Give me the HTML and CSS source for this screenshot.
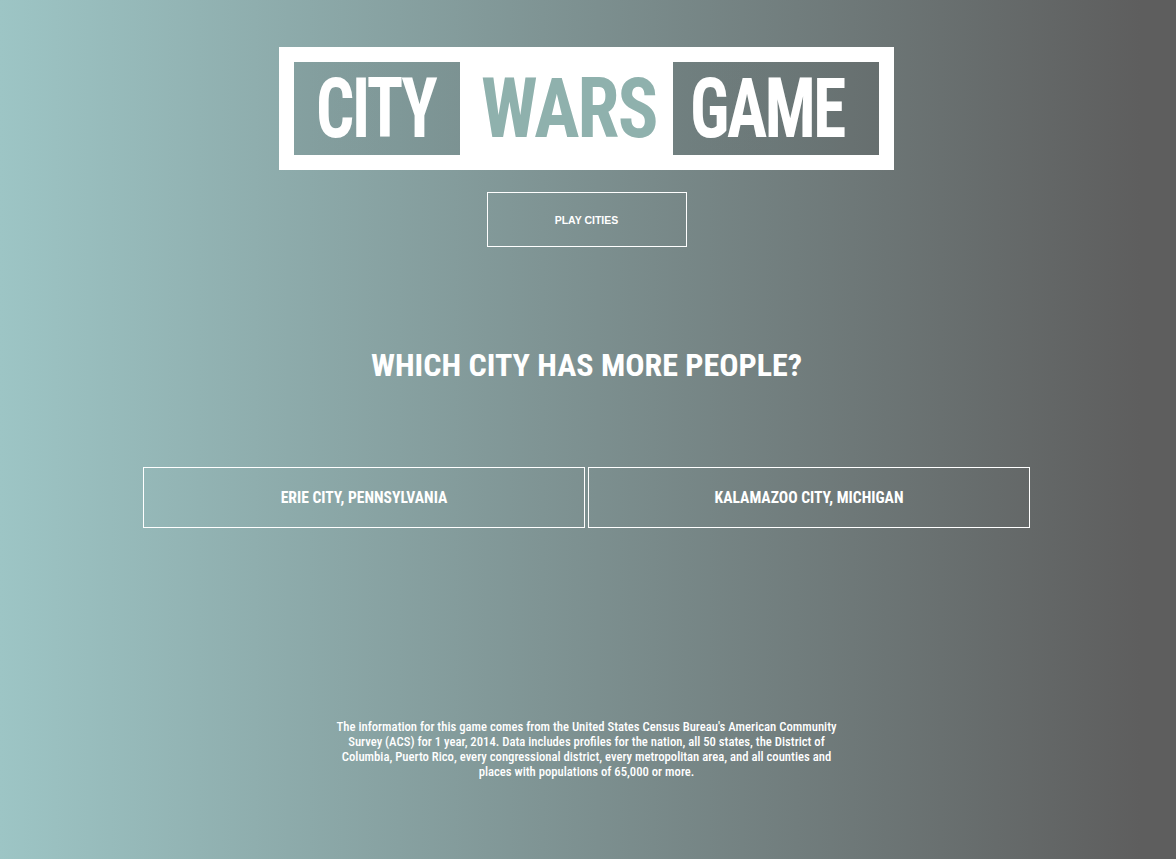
FILE: index.html
```html
<!DOCTYPE html>
<html>
<head>
<meta charset="utf-8">
<link rel="stylesheet" href="styles.css">
</head>
<body>
<main class="page">
  <header class="logo">
    <div class="logo-box logo-city"><span class="logo-word">CITY</span></div>
    <div class="logo-mid"><span class="logo-word wars">WARS</span></div>
    <div class="logo-box logo-game"><span class="logo-word">GAME</span></div>
  </header>
  <button class="play">PLAY CITIES</button>
  <h1 class="question">WHICH CITY HAS MORE PEOPLE?</h1>
  <div class="choices">
    <button class="choice">ERIE CITY, PENNSYLVANIA</button>
    <button class="choice">KALAMAZOO CITY, MICHIGAN</button>
  </div>
  <p class="note">The information for this game comes from the United States Census Bureau's American Community Survey (ACS) for 1 year, 2014. Data includes profiles for the nation, all 50 states, the District of Columbia, Puerto Rico, every congressional district, every metropolitan area, and all counties and places with populations of 65,000 or more.</p>
</main>
</body>
</html>
```

FILE: styles.css
```css
html, body {
  margin: 0;
  height: 100%;
}
body {
  background: linear-gradient(to right, #9dc5c5 0%, #5e5e5e 97%, #5e5e5e 100%);
  background-attachment: fixed;
  font-family: "Roboto Condensed", "Roboto", "Liberation Sans", sans-serif;
  color: #fff;
  padding-right: 3px;
}
.page {
  display: flex;
  flex-direction: column;
  align-items: center;
  padding-top: 47px;
}
.logo {
  background: #fff;
  padding: 15px;
  display: grid;
  grid-template-columns: 166px 213px 206px;
  height: 93px;
}
.logo-box {
  background: linear-gradient(rgba(0, 0, 0, 0.06), rgba(0, 0, 0, 0.06)),
    linear-gradient(to right, #9dc5c5 0%, #5e5e5e 97%, #5e5e5e 100%);
  background-attachment: fixed, fixed;
  display: flex;
  align-items: center;
  min-width: 0;
}
.logo-city {
  padding-left: 22px;
}
.logo-game {
  padding-left: 17px;
}
.logo-mid {
  display: flex;
  align-items: center;
  padding-left: 21px;
  min-width: 0;
}
.logo-word {
  display: inline-block;
  font-weight: 700;
  font-size: 84px;
  line-height: 1;
  letter-spacing: -3px;
  color: #fff;
  transform: scaleX(0.8);
  transform-origin: left center;
  white-space: nowrap;
}
.logo-word.wars {
  color: #8fb1ad;
  letter-spacing: -2px;
  transform: scaleX(0.9);
}
.play {
  margin-top: 22px;
  width: 200px;
  height: 55px;
  background: transparent;
  border: 1px solid #fff;
  color: #fff;
  font-family: "Liberation Sans", Arial, sans-serif;
  font-weight: 700;
  font-size: 10.5px;
  padding: 0;
}
.question {
  margin: 98px 0 0;
  font-size: 32px;
  line-height: 40px;
  font-weight: 700;
}
.choices {
  margin-top: 82px;
  display: flex;
  gap: 3px;
}
.choice {
  width: 442px;
  height: 61px;
  background: transparent;
  border: 1px solid #fff;
  color: #fff;
  font-family: "Roboto Condensed", "Roboto", "Liberation Sans", sans-serif;
  font-weight: 700;
  font-size: 15.6px;
  padding: 0;
}
.note {
  margin: 191px 0 0;
  width: 510px;
  text-align: center;
  font-size: 12.7px;
  line-height: 15px;
  font-weight: 500;
}
```
